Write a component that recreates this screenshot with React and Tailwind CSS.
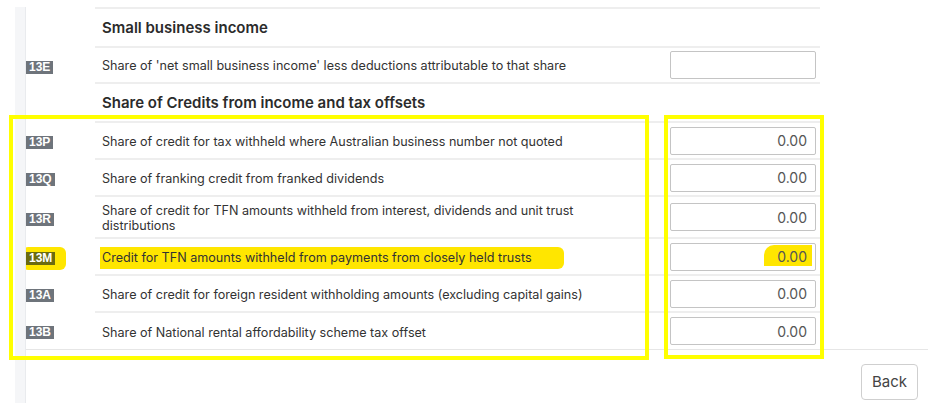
import React from 'react';

const rows = [
    { code: '13P', label: 'Share of credit for tax withheld where Australian business number not quoted', h: 'h-[37px] border-b-2' },
    { code: '13Q', label: 'Share of franking credit from franked dividends', h: 'h-[37px] border-b-2' },
    { code: '13R', label: 'Share of credit for TFN amounts withheld from interest, dividends and unit trust distributions', h: 'h-[42px] border-b-2' },
    { code: '13M', label: 'Credit for TFN amounts withheld from payments from closely held trusts', h: 'h-[37px] border-b-2', marked: true },
    { code: '13A', label: 'Share of credit for foreign resident withholding amounts (excluding capital gains)', h: 'h-[37px] border-b-2' },
    { code: '13B', label: 'Share of National rental affordability scheme tax offset', h: 'h-[36px]' },
];

const Badge = ({ code, marked }) => (
    <div className="w-[69px] flex items-center pt-[2px]">
        <span
            className={`relative px-[3px] text-[12px] leading-[13px] font-bold text-white ${marked ? 'bg-[#6b6b10]' : 'bg-[#6e747b]'}`}
            style={{ fontFamily: '"Liberation Sans", Arial, sans-serif' }}
        >
            {marked && <span className="absolute -left-[4px] -top-[5px] -z-10 w-[44px] h-[23px] bg-[#ffe600] rounded-[6px]"></span>}
            {code}
        </span>
    </div>
);

const Amount = ({ value, marked }) => (
    <div className="relative w-[146px] h-[28px] border border-[#c4c4c4] rounded-[2px] bg-white flex items-center justify-end pr-[8px] text-[14px] text-[#555]">
        {marked && <span className="absolute right-[3px] top-[1px] w-[48px] h-[21px] bg-[#ffe600] rounded-tl-[10px]"></span>}
        <span className="relative">{value}</span>
    </div>
);

const Heading = ({ children, h }) => (
    <div className="flex">
        <div className="w-[69px]"></div>
        <div className={`w-[725px] ${h} border-b-2 border-[#eeeeee] flex items-center pl-[7px] pt-[2px] text-[15px] font-semibold text-[#2b2b2b]`}>
            {children}
        </div>
    </div>
);

export default function App() {
    return (
        <div className="relative w-[928px] h-[411px] bg-white overflow-hidden isolate" style={{ fontFamily: 'Inter, "Noto Sans", sans-serif' }}>
            <div className="flex pt-[7px] h-[403px]">
                <div className="ml-[15px] w-[11px] bg-[#f5f6f8] border-r border-[#e9ebee]"></div>
                <div className="flex-1 flex flex-col">
                    <div className="ml-[69px] w-[725px] border-t-2 border-[#eeeeee]"></div>
                    <Heading h="h-[39px]">Small business income</Heading>
                    <div className="flex">
                        <Badge code="13E" />
                        <div className="w-[725px] h-[36px] border-b-2 border-[#eeeeee] flex items-center justify-between pl-[7px] pr-[4px] text-[12.6px] text-[#333]">
                            <span className="pt-[3px]">Share of 'net small business income' less deductions attributable to that share</span>
                            <Amount value="" />
                        </div>
                    </div>
                    <Heading h="h-[39px]">Share of Credits from income and tax offsets</Heading>
                    {rows.map((r) => (
                        <div key={r.code} className="flex">
                            <Badge code={r.code} marked={r.marked} />
                            <div className={`w-[725px] ${r.h} border-[#eeeeee] flex items-center justify-between pl-[7px] pr-[4px] text-[12.6px] leading-[15px] text-[#333]`}>
                                <span className="relative max-w-[490px] pt-[2px]">
                                    {r.marked && <span className="absolute -left-[2px] -right-[32px] -top-[1px] -bottom-[4px] -z-10 bg-[#ffe600] rounded-r-[6px]"></span>}
                                    {r.label}
                                </span>
                                <Amount value="0.00" marked={r.marked} />
                            </div>
                        </div>
                    ))}
                    <div className="flex-1 border-t border-[#e6e6e6] flex justify-end items-start pt-[14px] pr-[10px]">
                        <button className="w-[57px] h-[36px] border border-[#cfcfcf] rounded-[4px] bg-white text-[15px] text-[#444]">Back</button>
                    </div>
                </div>
            </div>

            {/* annotation boxes */}
            <div className="absolute left-[9px] top-[115px] w-[640px] h-[245px] border-[4px] border-[#ffff00]"></div>
            <div className="absolute left-[664px] top-[115px] w-[160px] h-[244px] border-[4px] border-[#ffff00]"></div>
        </div>
    );
}
